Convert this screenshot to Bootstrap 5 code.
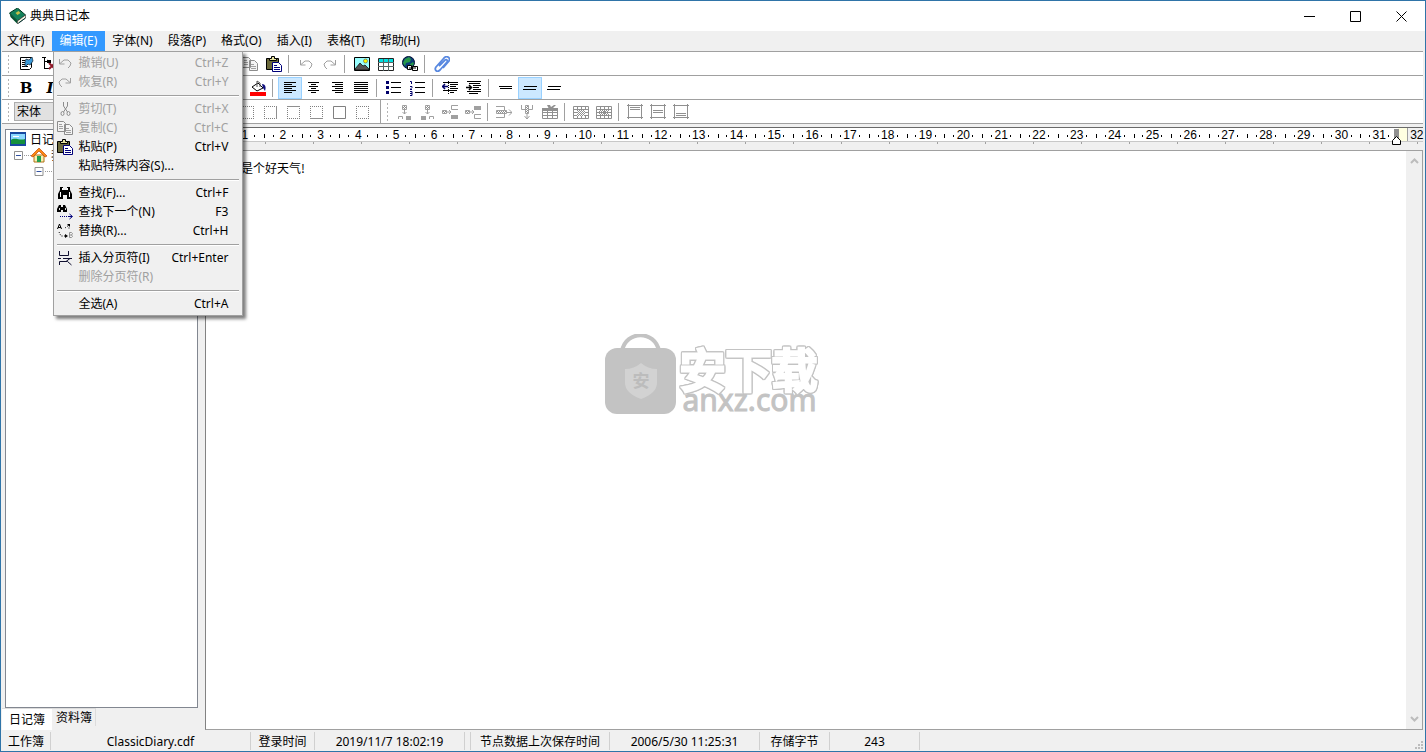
<!DOCTYPE html>
<html lang="zh-CN">
<head>
<meta charset="utf-8">
<meta name="viewport" content="width=device-width, initial-scale=1">
<title>典典日记本</title>
<link href="https://cdn.jsdelivr.net/npm/bootstrap@5.3.0/dist/css/bootstrap.min.css" rel="stylesheet">
<style>
  :root { --face: #f0f0f0; --line: #a0a0a0; --ui: "Noto Sans", "Noto Sans CJK SC", sans-serif; }
  body { font: 12px/18px var(--ui); color: #000; background: var(--face); overflow: hidden; }
  button { font: inherit; color: inherit; border: 0; background: none; padding: 0; }
  .window { outline: 1px solid #2f74a8; outline-offset: -1px; }
  .titlebar { background: #fff; padding: 0 1px 0 8px; margin: 1px 1px 0; height: 30px; }
  .caption-btn { width: 46px; height: 29px; }
  .menubar { height: 20px; }
  .menubar .nav-link { padding: 1px 8px 1px 7px; color: #000; line-height: 18px; height: 20px; }
  .menubar .nav-link.show { background: #3399ff; color: #fff; }
  .edit-menu { top: 100%; left: 1px; width: 190px; margin: 0; padding: 1px 2px 2px; border: 1px solid var(--line); border-radius: 0; background: var(--face); box-shadow: 3px 3px 3px rgba(0,0,0,.5); font-size: 12px; z-index: 20; }
  .edit-menu .dropdown-item { padding: 0 12px 0 1px; height: 19px; line-height: 18px; color: #000; }
  .edit-menu .dropdown-item:disabled { color: var(--line); }
  .edit-menu .dropdown-item svg, .blank { width: 16px; height: 16px; margin-right: 5px; flex: none; }
  .edit-menu hr { margin: 4px 1px 2px; border: 0; border-top: 1px solid var(--line); border-bottom: 1px solid #fff; opacity: 1; height: 2px; }

  .tool-row { height: 24px; border-top: 1px solid var(--line); background: #fff; margin: 0 3px 0 2px; padding-left: 5px; }
  .tool-row:last-child { height: 25px; border-bottom: 1px solid var(--line); }
  .grip { width: 7px; height: 19px; background: radial-gradient(circle, #b4b4b4 1px, transparent 1px) 0 0 / 3px 4px repeat-y; }
  .tool-btn { width: 24px; height: 22px; margin-top: 1px; padding: 3px 4px; flex: none; align-self: flex-start; display: flex; justify-content: center; }
  .tool-btn b, .tool-btn i { font: bold 15px/16px "DejaVu Serif", serif; }
  .tool-btn i { font-style: italic; }
  .tool-btn.active { background: #cce8ff; box-shadow: inset 0 0 0 1px #99d1ff; }
  .tool-row.narrow .tool-btn { width: 23px; padding: 3px; justify-content: start; }
  .tool-row.narrow .tool-btn svg { flex: none; }
  .tool-sep { width: 8px; height: 18px; flex: none; background: linear-gradient(#a0a0a0, #a0a0a0) 2px 0 / 1px 100% no-repeat; }
  .tool-sep.tall { height: 23px; }
  .combo { height: 19px; border: 1px solid #adadad; background: #e1e1e1; appearance: none; font: 12px/17px var(--ui); padding: 0 2px; margin-right: 2px; flex: none; }
  .combo-font { width: 136px; } .combo-size { width: 59px; }

  .side { width: 198px; padding: 5px 0 0 5px; }
  .tree { border: 1px solid #828790; background: #fff; padding: 1px 4px; font-family: "Noto Sans CJK SC", sans-serif; }
  .tree li { height: 16px; line-height: 16px; white-space: nowrap; }
  .tree svg { flex: none; }
  .book-tabs { height: 22px; margin-left: -3px; }
  .book-tabs button { height: 22px; padding: 0 7px 2px; background: #fff; border-top: 1px solid #dcdcdc; font-family: "Noto Sans CJK SC", sans-serif; }
  .book-tabs button + button { height: 18px; padding: 0 3px 2px 4px; line-height: 14px; background: var(--face); border-right: 1px solid #dcdcdc; }

  .editor-side { margin-left: 7px; margin-right: 3px; padding-top: 3px; min-width: 0; }
  .ruler { height: 14px; border-top: 1px solid #696969; background: #fff; font: 12px/14px "Liberation Sans", sans-serif; }
  .ruler-start { width: 21px; }
  .ruler-cm { flex: 1 1 0; text-align: center; background:
      linear-gradient(#000,#000) 0 6px / 1px 4px no-repeat,
      linear-gradient(#000,#000) 24% 7px / 1px 2px no-repeat,
      linear-gradient(#000,#000) 76% 7px / 1px 2px no-repeat; }
  .ruler-end { width: 25px; background: linear-gradient(90deg, #ffffe1 9px, #a0a0a0 9px, #a0a0a0 10px, var(--face) 10px); padding-left: 12px; }
  .ruler-mark { position: absolute; right: 22px; top: 1px; }
  .ruler-ticks { height: 9px; background: repeating-linear-gradient(90deg, transparent 0 12px, #a0a0a0 12px 13px, transparent 13px 48px) 0 0 / 100% 2px no-repeat; border-top: 1px solid #c8c8c8; }
  .page { background: #fff; border: 1px solid #a0a0a0; border-left-color: #828282; }
  .page-text { font: 12px/16px "Noto Sans CJK SC", sans-serif; padding: 9px 11px; margin: 0; outline: 0; }
  .scroller { width: 16px; background: var(--face); }
  .scroller button { height: 20px; display: flex; align-items: center; justify-content: center; }

  .statusbar { height: 22px; padding: 2px 0 2px 2px; line-height: 20px; }
  .statusbar span { border-right: 1px solid #d0d0d0; text-align: center; flex: none; }
  .w-6 { width: 6px; } .w-49 { width: 49px; } .w-64 { width: 64px; } .w-70 { width: 70px; } .w-90 { width: 90px; }
  .w-139 { width: 139px; } .w-150 { width: 150px; } .w-200 { width: 200px; }
  .size-grip { position: absolute; right: 2px; bottom: 2px; }

  .watermark { position: absolute; inset: 0; pointer-events: none; color: #c3c3c3; z-index: 5; padding: 0 4px 4px 0; }
  .wm-text { padding-top: 12px; }
  .wm-cn { font: 500 46px/40px "Noto Sans CJK SC", sans-serif; color: #fff; -webkit-text-stroke: 3px #fff; stroke-linejoin: round;
    filter: drop-shadow(1px 0 0 #c3c3c3) drop-shadow(-1px 0 0 #c3c3c3) drop-shadow(0 1px 0 #c3c3c3) drop-shadow(0 -1px 0 #c3c3c3); }
  .wm-url { font: 30px/26px "Noto Sans", sans-serif; -webkit-text-stroke: 1px #c3c3c3; padding-left: 3px; }
</style>
</head>
<body>
<svg class="position-absolute" width="0" height="0" xmlns="http://www.w3.org/2000/svg">
  <defs>
    <pattern id="hatch" width="2" height="2" patternUnits="userSpaceOnUse"><path d="M0 0h1v1H0zM1 1h1v1H1z" fill="#909090"/></pattern>
  </defs>
  <symbol id="i-book" viewBox="0 0 16 16"><path d="M0 5l8-5 8 7-8 6z" fill="#12805a" stroke="#003820"/><path d="M0 5l8 8v3L1 9z" fill="#045030"/><path d="M8 13l8-6v3l-8 6z" fill="#f4f4e0" stroke="#333" stroke-width=".6"/><path d="M6 5l3-2 2 2-3 2z" fill="#c5bf48"/><path d="M9 15l7-5" stroke="#033"/></symbol>
  <symbol id="i-props" viewBox="0 0 16 16"><path d="M2.500 1.500h11v10l-2 2h-9z" fill="#fff" stroke="#000"/><path d="M4 4.500h3M4 6.500h3M4 8.500h6M4 10.500h6" stroke="#000"/><path d="M8 3l3 1 3-3 1 4-3 4-2-1-3 3V6z" fill="#3b9ad8" stroke="#123" stroke-width=".7"/></symbol>
  <symbol id="i-tree" viewBox="0 0 16 16"><path d="M0 1.500h4M2.500 1v12M2 5.500h5M2 12.500h5M5 4l3 2" stroke="#000" fill="none"/><path d="M7 7l6 6M13 7l-6 6" stroke="#901828" stroke-width="2"/><path d="M5 4h4v3H5z"/></symbol>
  <symbol id="i-undo" viewBox="0 0 16 16"><path d="M2.500 4v5h5" fill="none" stroke="#a0a0a0"/><path d="M3 8.500l4-3.500h4l3 3-1 3-2 2" fill="none" stroke="#a0a0a0"/></symbol>
  <symbol id="i-redo" viewBox="0 0 16 16"><path d="M13.500 4v5h-5" fill="none" stroke="#a0a0a0"/><path d="M13 8.500L9 5H5L2 8l1 3 2 2" fill="none" stroke="#a0a0a0"/></symbol>
  <symbol id="i-cut" viewBox="0 0 16 16"><path d="M6.500 1v4l4 6M10.500 1v4l-4 6" fill="none" stroke="#8c8c8c"/><ellipse cx="5.500" cy="12.500" rx="1.500" ry="2" fill="none" stroke="#8c8c8c"/><ellipse cx="11.500" cy="12.500" rx="1.500" ry="2" fill="none" stroke="#8c8c8c"/></symbol>
  <symbol id="i-copy" viewBox="0 0 16 16"><path d="M.5 1.500h6l2 2v8h-8zM7.500 4.500h5l3 3v7h-8z" fill="#f4f4f4" stroke="#8c8c8c"/><path d="M2 4.500h3M2 6.500h4M2 8.500h4M9 8.500h3M9 10.500h5M9 12.500h5" stroke="#a0a0a0"/></symbol>
  <symbol id="i-paste" viewBox="0 0 16 16"><path d="M.5 2.500h12v11H.5z" fill="#6c6a3c" stroke="#000"/><path d="M3.500 2.500h2v-2h3v2h2v2h-7z" fill="#e8e4a0" stroke="#000"/><path d="M6.500 6.500h6l3 3v6h-9z" fill="#fff" stroke="#00007a"/><path d="M8 9.500h3M8 11.500h6M8 13.500h6" stroke="#00007a"/></symbol>
  <symbol id="i-find" viewBox="0 0 16 16"><path d="M3 2h3v3h4V2h3v3l2 4v5h-5v-4H6v4H1V9l2-4z"/><path d="M3.500 7v5M12.500 7v5M5.500 3v2M10.500 3v2" stroke="#fff"/></symbol>
  <symbol id="i-next" viewBox="0 0 16 16"><path d="M2 1h2v2h2V1h2l2 4v3H6V6H4v2H0V5z"/><path d="M2.500 4v2M8.500 4v2" stroke="#ddd"/><path d="M3 12.500h8" stroke="#00007a" stroke-dasharray="1 1"/><path d="M11 12.500h4M12.500 10l3 2.500-3 2.500" stroke="#00007a" fill="none"/></symbol>
  <symbol id="i-replace" viewBox="0 0 16 16"><path d="M.5 6l2-5 2 5M1 4.500h3" fill="none" stroke="#000"/><path d="M12.500 9.500h2l1 1-1 1.500 1 1.500-1 1h-2zM12.500 12h2" fill="none" stroke="#909090"/><path d="M2 9l2 4h5M8 5l4-3v4" fill="none" stroke="#000" stroke-dasharray="1 1.500"/><path d="M8 11l3 2-3 2zM10 1h3v3z"/></symbol>
  <symbol id="i-break" viewBox="0 0 16 16"><path d="M2.500 1v4.500h9V1M1 8.500h3M6 8.500h9M2.500 15v-3.500h8l4 3.500M9 11.500l4-3" fill="none" stroke="#101030"/></symbol>
  <symbol id="i-image" viewBox="0 0 16 16"><path d="M.5 1.500h15v13H.5z" fill="#9ff" stroke="#000"/><circle cx="11.500" cy="5" r="2" fill="#ff0" stroke="#555" stroke-width=".6"/><path d="M1 13l5-6 3 3 2-1 4 4v1H1z" fill="#555" stroke="#000" stroke-width=".7"/></symbol>
  <symbol id="i-table" viewBox="0 0 16 16"><path d="M.5 2.500h15v12H.5z" fill="#fff" stroke="#222"/><path d="M1 3h14v3H1z" fill="#00e0e0"/><path d="M0 6.500h16M0 10.500h16M5.500 3v12M10.500 3v12" stroke="#566"/></symbol>
  <symbol id="i-globe" viewBox="0 0 16 16"><circle cx="6.500" cy="6.500" r="6" fill="#0a3c78" stroke="#001030"/><path d="M3 3l4-2 2 2-1 3-4 1-1 3-2-3zM8 8l3-2 1 2-3 3z" fill="#269848"/><path d="M5.500 9.500h4v4h-4zM10.500 10.500h5v4h-5z" fill="#fff" stroke="#000"/><path d="M7 12h7" stroke="#000"/></symbol>
  <symbol id="i-clip" viewBox="0 0 16 16"><path d="M5 10l6-6c2-1 3 1 2 2l-7 8c-3 3-6 0-4-3l8-9c3-3 7 0 5 3l-6 7" fill="none" stroke="#5888e0" stroke-width="1.800"/></symbol>
  <symbol id="i-fill" viewBox="0 0 16 16"><path d="M2 7l6-4 5 5-6 3z" fill="#fff" stroke="#000"/><path d="M7 7V1l3 2v4" fill="none" stroke="#555"/><path d="M12 4c4 0 4 4 3 7l-2-3z" fill="#101080"/><path d="M0 12h16v4H0z" fill="#f00"/></symbol>
  <symbol id="i-left" viewBox="0 0 16 16"><path d="M2 2.500h12M2 4.500h8M2 6.500h12M2 8.500h8M2 10.500h12M2 12.500h8" stroke="#000"/></symbol>
  <symbol id="i-center" viewBox="0 0 16 16"><path d="M2 2.500h11M5 4.500h5M3 6.500h9M5 8.500h5M2 10.500h11M5 12.500h5" stroke="#000"/></symbol>
  <symbol id="i-right" viewBox="0 0 16 16"><path d="M2 2.500h11M5 4.500h8M2 6.500h11M5 8.500h8M2 10.500h11M5 12.500h8" stroke="#000"/></symbol>
  <symbol id="i-justify" viewBox="0 0 16 16"><path d="M0 2.500h14M0 4.500h14M0 6.500h14M0 8.500h14M0 10.500h14M0 12.500h14" stroke="#000"/></symbol>
  <symbol id="i-bullets" viewBox="0 0 16 16"><path d="M0 1h3v3H0zM0 6h3v3H0zM0 11h3v3H0z" fill="#00006a"/><path d="M5 2.500h10M5 7.500h10M5 12.500h10" stroke="#000"/></symbol>
  <symbol id="i-numbers" viewBox="0 0 16 16"><path d="M0 1.500h1.500V4M0 6.500h2v1L0 9.500h2M0 11.500h2v4H0M0 13.500h2" fill="none" stroke="#00006a"/><path d="M5 2.500h10M5 7.500h10M5 12.500h10" stroke="#000"/></symbol>
  <symbol id="i-outdent" viewBox="0 0 16 16"><path d="M1 2.500h15M8 4.500h8M8 6.500h6M8 8.500h8M1 10.500h14M8 12.500h4" stroke="#000"/><path d="M0 6.500h6M3 4L.5 6.500 3 9" fill="none" stroke="#00006a" stroke-width="1.500"/><path d="M6.500 1v14" stroke="#000" stroke-dasharray="1 1"/></symbol>
  <symbol id="i-indent" viewBox="0 0 16 16"><path d="M1 1.500h14M3 3.500h11M7 5.500h8M7 7.500h6M7 9.500h8M1 11.500h14M3 13.500h9" stroke="#000"/><path d="M0 7.500h5M3 5l2.500 2.500L3 10" fill="none" stroke="#000" stroke-width="1.500"/></symbol>
  <symbol id="i-sp1" viewBox="0 0 16 16"><path d="M1 6.500h13M2 8.500h12" stroke="#000"/></symbol>
  <symbol id="i-sp2" viewBox="0 0 16 16"><path d="M2 6.500h13M1 9.500h13" stroke="#000"/></symbol>
  <symbol id="i-b0" viewBox="0 0 16 16"><path d="M2 2.500h13M2 14.500h13M2.500 2v13M14.500 2v13" stroke="#808080" stroke-dasharray="1 1"/></symbol>
  <symbol id="i-br" viewBox="0 0 16 16"><path d="M2 2.500h13M2 14.500h13M2.500 2v13" stroke="#808080" stroke-dasharray="1 1"/><path d="M14.500 2v13" stroke="#909090"/></symbol>
  <symbol id="i-bt" viewBox="0 0 16 16"><path d="M2 14.500h13M2.500 2v13M14.500 2v13" stroke="#808080" stroke-dasharray="1 1"/><path d="M2 2.500h13" stroke="#909090"/></symbol>
  <symbol id="i-bb" viewBox="0 0 16 16"><path d="M2 2.500h13M2.500 2v13M14.500 2v13" stroke="#808080" stroke-dasharray="1 1"/><path d="M2 14.500h13" stroke="#909090"/></symbol>
  <symbol id="i-ba" viewBox="0 0 16 16"><path d="M2.500 2.500h12v12h-12z" fill="none" stroke="#808080"/></symbol>
  <symbol id="i-coll" viewBox="0 0 16 16"><path d="M6.500 1.500h4v4h-4z" fill="url(#hatch)" stroke="#a0a0a0"/><path d="M8.500 5v5M6.500 8l2 2 2-2" fill="none" stroke="#a0a0a0"/><path d="M2.500 15v-2.500h4V15" fill="none" stroke="#a0a0a0"/><path d="M10 12h5v4h-5z" fill="#a0a0a0"/></symbol>
  <symbol id="i-colr" viewBox="0 0 16 16"><path d="M6.500 1.500h4v4h-4z" fill="url(#hatch)" stroke="#a0a0a0"/><path d="M8.500 5v5M6.500 8l2 2 2-2" fill="none" stroke="#a0a0a0"/><path d="M10.500 15v-2.500h4V15" fill="none" stroke="#a0a0a0"/><path d="M2 12h5v4H2z" fill="#a0a0a0"/></symbol>
  <symbol id="i-rowt" viewBox="0 0 16 16"><path d="M.5 6.500h4v3h-4z" fill="url(#hatch)" stroke="#a0a0a0"/><path d="M5 8h4M7 6l2 2-2 2M16 1.500H9.500v4H16" fill="none" stroke="#a0a0a0"/><path d="M9 11h7v4H9z" fill="#a0a0a0"/></symbol>
  <symbol id="i-rowb" viewBox="0 0 16 16"><path d="M.5 6.500h4v3h-4z" fill="url(#hatch)" stroke="#a0a0a0"/><path d="M5 8h4M7 6l2 2-2 2M16 14.500H9.500v-4H16" fill="none" stroke="#a0a0a0"/><path d="M9 2h7v4H9z" fill="#a0a0a0"/></symbol>
  <symbol id="i-delrow" viewBox="0 0 16 16"><path d="M.5 6.500h10v3H.5z" fill="url(#hatch)" stroke="#a0a0a0"/><path d="M0 2.500h8.500V6M0 13.500h8.500V10M10 8.500h6M13 5.500l3 3-3 3" fill="none" stroke="#a0a0a0"/></symbol>
  <symbol id="i-delcol" viewBox="0 0 16 16"><path d="M6.500 1.500h3v8h-3z" fill="url(#hatch)" stroke="#a0a0a0"/><path d="M2.500 1v4.500H6M13.500 1v4.500H10M8 9v6M5.500 12L8 15l2.500-3" fill="none" stroke="#a0a0a0"/></symbol>
  <symbol id="i-deltab" viewBox="0 0 16 16"><path d="M.5 4.500h15v10H.5zM0 8.500h16M0 11.500h16M5.500 5v10M10.500 5v10" fill="none" stroke="#909090"/><path d="M0 4h16v3H0zM5 1h3l1 2 3-2h2l-4 4H7z" fill="#909090"/></symbol>
  <symbol id="i-merge" viewBox="0 0 16 16"><path d="M4 5h8v7H4z" fill="url(#hatch)"/><path d="M.5 2.500h15v12H.5zM0 5.500h16M0 11.500h4M12 11.500h4M0 8.500h4M12 8.500h4M4.500 2v4M8.500 2v3M12.500 2v4M4.500 12v3M8.500 12v3M12.500 12v3" fill="none" stroke="#909090"/></symbol>
  <symbol id="i-split" viewBox="0 0 16 16"><path d="M3 5h10v7H3z" fill="url(#hatch)"/><path d="M.5 2.500h15v12H.5zM0 5.500h16M0 8.500h16M0 11.500h16M4.500 2v4M8.500 2v12M12.500 2v4M4.500 12v3M12.500 12v3" fill="none" stroke="#909090"/></symbol>
  <symbol id="i-vt" viewBox="0 0 16 16"><path d="M0 1.500h16M0 13.500h16M1.500 0v15M14.500 0v15M3 3.500h10M3 5.500h10" stroke="#909090"/></symbol>
  <symbol id="i-vm" viewBox="0 0 16 16"><path d="M0 1.500h16M0 13.500h16M1.500 0v15M14.500 0v15M3 6.500h10M3 8.500h10" stroke="#909090"/></symbol>
  <symbol id="i-vb" viewBox="0 0 16 16"><path d="M0 1.500h16M0 13.500h16M1.500 0v15M14.500 0v15M3 9.500h10M3 11.500h10" stroke="#909090"/></symbol>
  <symbol id="i-pic" viewBox="0 0 16 16"><path d="M0 1h16v14H0z" fill="#1848a0"/><path d="M1 3h14v10H1z" fill="#8cd8ff"/><path d="M1 9c4-3 9 1 14-1v5H1z" fill="#14903c"/><path d="M3 5h6v1H3z" fill="#fff"/></symbol>
  <symbol id="i-home" viewBox="0 0 16 16"><path d="M3 8h10v7H3z" fill="#f8f0b0" stroke="#b07018"/><path d="M0 9l8-8 8 8-2 1-6-6-6 6z" fill="#ff8a10" stroke="#c04808" stroke-width=".7"/><path d="M6 9h4v6H6z" fill="#20a050"/></symbol>
  <symbol id="i-minus" viewBox="0 0 9 9"><path d="M.5.5h8v8h-8z" fill="#fff" stroke="#919191"/><path d="M2 4.500h5" stroke="#3050a0"/></symbol>
</svg>

<div class="window vh-100 d-flex flex-column position-relative">
  <header class="titlebar d-flex align-items-center">
    <svg width="17" height="16"><use href="#i-book"/></svg>
    <span class="ms-1 me-auto">典典日记本</span>
    <button class="caption-btn" aria-label="最小化"><svg width="11" height="11"><path d="M0 5.500h11" stroke="#000"/></svg></button>
    <button class="caption-btn" aria-label="最大化"><svg width="11" height="11"><path d="M.5.5h10v10H.5z" fill="none" stroke="#000"/></svg></button>
    <button class="caption-btn" aria-label="关闭"><svg width="11" height="11"><path d="M.5.5l10 10M10.500.5l-10 10" stroke="#000"/></svg></button>
  </header>

  <nav class="menubar nav flex-nowrap">
    <a class="nav-link" href="#">文件(F)</a>
    <div class="dropdown">
      <a class="nav-link show" href="#" aria-expanded="true">编辑(E)</a>
      <div class="dropdown-menu edit-menu show">
        <button class="dropdown-item d-flex align-items-center" disabled><svg><use href="#i-undo"/></svg>撤销(U)<span class="ms-auto">Ctrl+Z</span></button>
        <button class="dropdown-item d-flex align-items-center" disabled><svg><use href="#i-redo"/></svg>恢复(R)<span class="ms-auto">Ctrl+Y</span></button>
        <hr>
        <button class="dropdown-item d-flex align-items-center" disabled><svg><use href="#i-cut"/></svg>剪切(T)<span class="ms-auto">Ctrl+X</span></button>
        <button class="dropdown-item d-flex align-items-center" disabled><svg><use href="#i-copy"/></svg>复制(C)<span class="ms-auto">Ctrl+C</span></button>
        <button class="dropdown-item d-flex align-items-center"><svg><use href="#i-paste"/></svg>粘贴(P)<span class="ms-auto">Ctrl+V</span></button>
        <button class="dropdown-item d-flex align-items-center"><span class="blank"></span>粘贴特殊内容(S)...</button>
        <hr>
        <button class="dropdown-item d-flex align-items-center"><svg><use href="#i-find"/></svg>查找(F)...<span class="ms-auto">Ctrl+F</span></button>
        <button class="dropdown-item d-flex align-items-center"><svg><use href="#i-next"/></svg>查找下一个(N)<span class="ms-auto">F3</span></button>
        <button class="dropdown-item d-flex align-items-center"><svg><use href="#i-replace"/></svg>替换(R)...<span class="ms-auto">Ctrl+H</span></button>
        <hr>
        <button class="dropdown-item d-flex align-items-center"><svg><use href="#i-break"/></svg>插入分页符(I)<span class="ms-auto">Ctrl+Enter</span></button>
        <button class="dropdown-item d-flex align-items-center" disabled><span class="blank"></span>删除分页符(R)</button>
        <hr>
        <button class="dropdown-item d-flex align-items-center"><span class="blank"></span>全选(A)<span class="ms-auto">Ctrl+A</span></button>
      </div>
    </div>
    <a class="nav-link" href="#">字体(N)</a>
    <a class="nav-link" href="#">段落(P)</a>
    <a class="nav-link" href="#">格式(O)</a>
    <a class="nav-link" href="#">插入(I)</a>
    <a class="nav-link" href="#">表格(T)</a>
    <a class="nav-link" href="#">帮助(H)</a>
  </nav>

  <div>
    <div class="tool-row d-flex align-items-center" data-tools="props tree | blank blank blank blank blank blank cut copy paste | undo redo | image table globe | clip"><span class="grip"></span></div>
    <div class="tool-row d-flex align-items-center" data-tools="B I | blank blank blank | blank blank blank blank fill | *left center right justify | bullets numbers | outdent indent | sp1 *sp2 sp2"><span class="grip"></span></div>
    <div class="tool-row narrow d-flex align-items-center" data-tools="b0 b0 br bt bb ba b0 || coll colr rowt rowb | delrow delcol deltab | merge split | vt vm vb"><span class="grip"></span>
      <select class="combo combo-font" aria-label="字体"><option>宋体</option></select>
      <select class="combo combo-size" aria-label="字号"><option>9</option></select>
    </div>
  </div>

  <main class="d-flex flex-grow-1">
    <aside class="side d-flex flex-column">
      <ul class="tree list-unstyled flex-grow-1 mb-0">
        <li class="d-flex align-items-center"><svg width="16" height="16" class="me-1"><use href="#i-pic"/></svg>日记本</li>
        <li class="d-flex align-items-center ps-1"><svg width="9" height="9"><use href="#i-minus"/></svg><svg width="8" height="9"><path d="M1 4.500h7" stroke="#999" stroke-dasharray="1 1"/></svg><svg width="16" height="16" class="me-1"><use href="#i-home"/></svg>我的</li>
        <li class="d-flex align-items-center ps-4"><svg width="10" height="9"><use href="#i-minus"/></svg><svg width="8" height="9"><path d="M1 4.500h7" stroke="#999" stroke-dasharray="1 1"/></svg></li>
      </ul>
      <div class="book-tabs d-flex align-items-start"><button>日记簿</button><button>资料簿</button></div>
    </aside>

    <section class="editor-side flex-grow-1 d-flex flex-column">
      <div class="ruler d-flex position-relative" id="ruler">
        <span class="ruler-start"></span>
        <span class="ruler-end">32</span>
        <svg class="ruler-mark" width="9" height="16"><path d="M2 0h5v10H2z" fill="#909090"/><path d="M.5 15.500v-4l4-4 4 4v4z" fill="#fff" stroke="#000"/></svg>
      </div>
      <div class="ruler-ticks"></div>
      <div class="page d-flex flex-grow-1">
        <p class="page-text flex-grow-1" contenteditable="true" spellcheck="false">今天是个好天气!</p>
        <div class="scroller d-flex flex-column justify-content-between">
          <button aria-label="向上"><svg width="9" height="6"><path d="M1 5l3.500-3.500L8 5" fill="none" stroke="#bcbcbc" stroke-width="2"/></svg></button>
          <button aria-label="向下"><svg width="9" height="6"><path d="M1 1l3.500 3.500L8 1" fill="none" stroke="#bcbcbc" stroke-width="2"/></svg></button>
        </div>
      </div>
    </section>
  </main>

  <footer class="statusbar d-flex position-relative">
    <span class="w-49">工作簿</span><span class="w-200">ClassicDiary.cdf</span><span class="w-64">登录时间</span><span class="w-150">2019/11/7 18:02:19</span><span class="w-6"></span><span class="w-139">节点数据上次保存时间</span><span class="w-150">2006/5/30 11:25:31</span><span class="w-70">存储字节</span><span class="w-90">243</span>
    <svg class="size-grip" width="9" height="9"><path d="M6 0h2v2H6zM3 3h2v2H3zM6 3h2v2H6zM0 6h2v2H0zM3 6h2v2H3zM6 6h2v2H6z" fill="#bcbcbc"/></svg>
  </footer>

  <div class="watermark d-flex align-items-center justify-content-center">
    <svg width="71" height="81" viewBox="0 0 71 81" class="me-1"><path d="M17 17C21-4 50-4 54 17" fill="none" stroke="#c3c3c3" stroke-width="4"/><rect y="14" width="71" height="66" rx="12" fill="#c3c3c3"/><path d="M20 35q9 0 16-6 7 6 16 6v14q0 10-16 16-16-6-16-16z" fill="#d2d2d2"/><text x="36" y="53" text-anchor="middle" font-family="Noto Sans CJK SC" font-weight="bold" font-size="17" fill="#bcbcbc">安</text></svg>
    <div class="wm-text"><div class="wm-cn">安下载</div><div class="wm-url">anxz.com</div></div>
  </div>
</div>

<script src="https://cdn.jsdelivr.net/npm/bootstrap@5.3.0/dist/js/bootstrap.bundle.min.js"></script>
<script>
  // Toolbars: a name is an icon, "|" a divider, "*" a pressed button
  document.querySelectorAll('[data-tools]').forEach(row => {
    row.dataset.tools.split(' ').forEach(name => {
      let html;
      if (name === '|') html = '<span class="tool-sep"></span>';
      else if (name === '||') html = '<span class="tool-sep tall ms-1"></span><span class="grip"></span>';
      else {
        const on = name[0] === '*', id = name.replace('*', '');
        const face = id === 'B' ? '<b>B</b>' : id === 'I' ? '<i>I</i>'
          : `<svg width="16" height="16"><use href="#i-${id}"/></svg>`;
        html = `<button class="tool-btn${on ? ' active' : ''}" aria-label="${id}">${face}</button>`;
      }
      row.insertAdjacentHTML('beforeend', html);
    });
  });
  // Ruler centimetres
  const end = document.querySelector('.ruler-end');
  for (let cm = 1; cm <= 31; cm++) end.insertAdjacentHTML('beforebegin', `<span class="ruler-cm">${cm}</span>`);
</script>
</body>
</html>
